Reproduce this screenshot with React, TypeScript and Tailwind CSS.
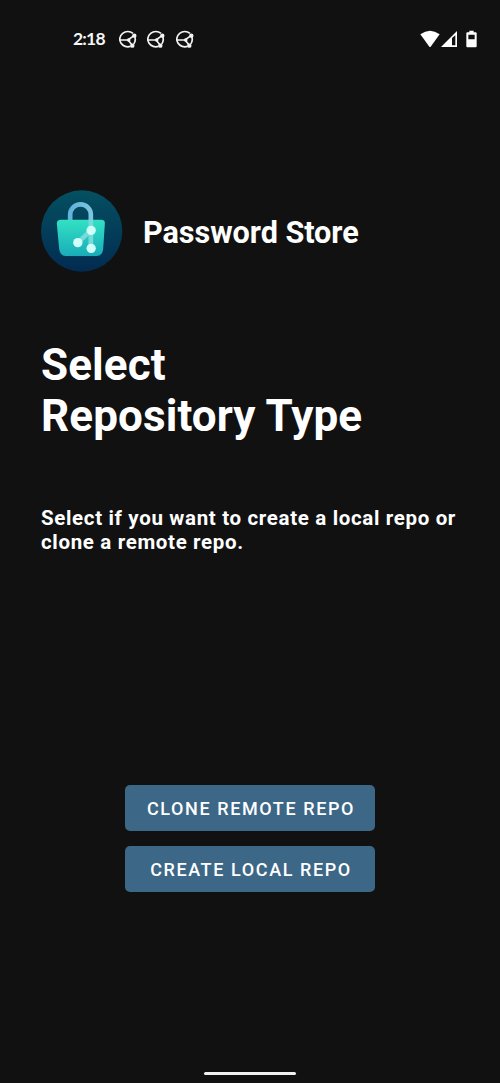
function GitNotification() {
  return (
    <svg className="h-[19px] w-[19px]" viewBox="0 0 57 57" fill="none" stroke="#f4f4f4">
      <path d="M45 10A24 23 0 1 0 38 49M50 20A24 23 0 0 1 47 42" strokeWidth="5" />
      <path d="M4 30H30L48 17M30 30L43 46" strokeWidth="5" />
      <g fill="#f4f4f4" stroke="none">
        <circle cx="32" cy="30" r="5.5" />
        <circle cx="49" cy="17" r="6.5" />
        <circle cx="43" cy="47" r="6.5" />
      </g>
    </svg>
  );
}

function StatusBar() {
  return (
    <header className="flex h-[78px] items-center pr-[23.5px] pl-[73px] text-[#f6f6f6]">
      <span className="w-[45px] font-['Lato',sans-serif] text-[17.5px] leading-5 font-bold tracking-[-0.8px]">2:18</span>
      <div className="flex gap-[9.3px]">
        <GitNotification />
        <GitNotification />
        <GitNotification />
      </div>
      <div className="ml-auto flex items-center">
        <svg className="h-[18px] w-[20px]" viewBox="0 0 60 54" fill="#fff">
          <path d="M1 13Q30-9 59 13L32 50Q30 52 28 50Z" />
        </svg>
        <svg className="h-[18px] w-[18px]" viewBox="0 0 54 54" fill="#fff">
          <path fillRule="evenodd" d="M3 51L51 3V51ZM36 24V46H46V16Z" />
        </svg>
        <svg className="ml-[7.5px] h-[18px] w-[11px]" viewBox="0 0 33 54" fill="#fff">
          <path fillRule="evenodd" d="M10 2H23V7H29Q32 7 32 10V49Q32 52 29 52H4Q1 52 1 49V10Q1 7 4 7H10ZM7 14V28H26V14Z" />
        </svg>
      </div>
    </header>
  );
}

function Logo() {
  return (
    <svg className="h-[82px] w-[82px] shrink-0" viewBox="18.5 15 246 246">
      <defs>
        <linearGradient id="disc" x1="0" y1="0" x2="0" y2="1">
          <stop stopColor="#045061" />
          <stop offset="1" stopColor="#022b51" />
        </linearGradient>
        <linearGradient id="bag" x1="0" y1="0" x2="0" y2="1">
          <stop stopColor="#32e1c3" />
          <stop offset="1" stopColor="#19adb9" />
        </linearGradient>
        <linearGradient id="shackle" x1="0" y1="0" x2="1" y2="0">
          <stop stopColor="#61b2dc" />
          <stop offset="1" stopColor="#7ac5df" />
        </linearGradient>
      </defs>
      <circle cx="140.5" cy="138" r="122" fill="url(#disc)" />
      <path d="M106 108V89A31 31 0 0 1 168 89V108" fill="none" stroke="url(#shackle)" strokeWidth="14" />
      <path d="M79 107H198Q212 107 210 120L205 195Q203 216 185 216H92Q76 216 73 195L66 120Q65 107 79 107Z" fill="#033c52" opacity=".55" />
      <path d="M79 104H198Q212 104 210 117L205 192Q203 213 185 213H92Q76 213 73 192L66 117Q65 104 79 104Z" fill="url(#bag)" />
      <path d="M161 104H175V190H161ZM163.2 131.1L172.8 140.9L133.8 178.1L124.2 167.9Z" fill="#78d9d9" />
      <g fill="#d0fffa">
        <circle cx="169" cy="136" r="14" />
        <circle cx="129" cy="173" r="14" />
        <circle cx="169" cy="190" r="14" />
      </g>
    </svg>
  );
}

function ActionButton({ label }: { label: string }) {
  return (
    <button className="flex h-[46.5px] w-[250px] items-center justify-center rounded-[5px] bg-[#3c6787] pt-[2.5px] pl-[2px] text-[18px] leading-6 font-medium tracking-[1.6px] whitespace-nowrap text-white">
      {label}
    </button>
  );
}

export default function App() {
  return (
    <div className="flex h-[1083px] w-[500px] flex-col overflow-hidden bg-[#111111] font-['Roboto',sans-serif] text-white">
      <StatusBar />
      <main className="flex flex-1 flex-col pt-[112px] pr-5 pl-[41px]">
        <div className="flex h-[82px] items-center gap-5">
          <Logo />
          <span className="pt-[4px] text-[30.6px] leading-9 font-bold tracking-[-0.05px] whitespace-nowrap">Password Store</span>
        </div>
        <h1 className="mt-[68px] text-[44px] leading-[51px] font-bold tracking-[0.1px]">
          Select
          <br />
          Repository Type
        </h1>
        <p className="mt-[64px] text-[20.5px] leading-6 font-bold tracking-[0.66px] whitespace-nowrap">
          Select if you want to create a local repo or
          <br />
          clone a remote repo.
        </p>
        <div className="mt-[230.5px] -ml-[21px] flex flex-col items-center gap-[14.5px]">
          <ActionButton label="CLONE REMOTE REPO" />
          <ActionButton label="CREATE LOCAL REPO" />
        </div>
      </main>
      <div className="mb-[8px] h-[3px] w-[92px] self-center rounded-full bg-[#f1f1f1]" />
    </div>
  );
}
